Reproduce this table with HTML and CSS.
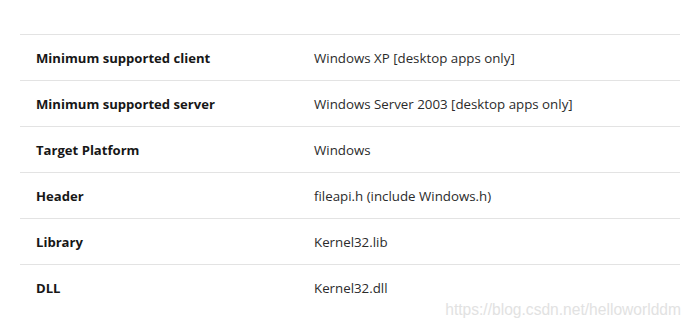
FILE: index.html
```html
<!DOCTYPE html>
<html lang="en">
<head>
    <meta charset="UTF-8">
    <title>Requirements</title>
    <link rel="stylesheet" href="styles.css">
</head>
<body>
    <div class="page">
        <table class="req-table">
            <tbody>
                <tr>
                    <td class="label">Minimum supported client</td>
                    <td>Windows XP [desktop apps only]</td>
                </tr>
                <tr>
                    <td class="label">Minimum supported server</td>
                    <td>Windows Server 2003 [desktop apps only]</td>
                </tr>
                <tr>
                    <td class="label">Target Platform</td>
                    <td>Windows</td>
                </tr>
                <tr>
                    <td class="label">Header</td>
                    <td>fileapi.h (include Windows.h)</td>
                </tr>
                <tr>
                    <td class="label">Library</td>
                    <td>Kernel32.lib</td>
                </tr>
                <tr>
                    <td class="label">DLL</td>
                    <td>Kernel32.dll</td>
                </tr>
            </tbody>
        </table>
        <div class="watermark">https://blog.csdn.net/helloworlddm</div>
    </div>
</body>
</html>
```
FILE: styles.css
```css
body {
    margin: 0;
    background-color: #fff;
    font-family: 'Segoe UI', 'Open Sans', 'Noto Sans', sans-serif;
}

.page {
    position: relative;
    width: 694px;
    height: 330px;
    padding: 34px 14px 0 20px;
    box-sizing: border-box;
}

.req-table {
    width: 660px;
    border-collapse: collapse;
    border-top: 1px solid #e3e3e3;
}

.req-table td {
    height: 45px;
    padding: 0 16px;
    font-size: 13.3px;
    color: #2b2b2b;
    border-bottom: 1px solid #e3e3e3;
    vertical-align: middle;
}

.req-table tr:last-child td {
    border-bottom: none;
}

.req-table td.label {
    width: 246px;
    font-size: 13.1px;
    font-weight: bold;
    color: #171717;
}

.watermark {
    position: absolute;
    right: 13px;
    top: 301px;
    font-family: 'Liberation Sans', Arial, sans-serif;
    font-size: 15.6px;
    color: #e2e2e2;
}
```
